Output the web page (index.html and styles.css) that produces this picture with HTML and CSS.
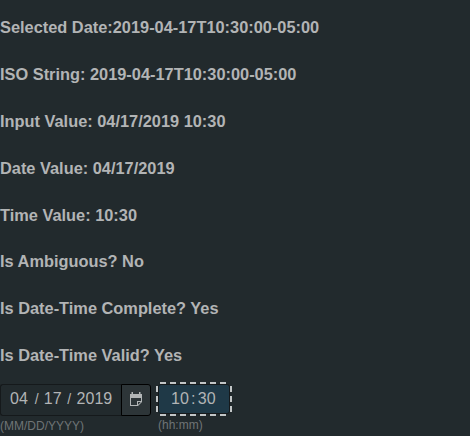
FILE: index.html
```html
<!DOCTYPE html>
<html lang="en">
<head>
<meta charset="utf-8">
<title>Date time picker</title>
<link rel="stylesheet" href="styles.css">
</head>
<body>
<h3>Selected Date:2019-04-17T10:30:00-05:00</h3>
<h3>ISO String: 2019-04-17T10:30:00-05:00</h3>
<h3>Input Value: 04/17/2019 10:30</h3>
<h3>Date Value: 04/17/2019</h3>
<h3>Time Value: 10:30</h3>
<h3>Is Ambiguous? No</h3>
<h3>Is Date-Time Complete? Yes</h3>
<h3>Is Date-Time Valid? Yes</h3>
<div class="picker">
  <div class="date">
    <div class="control">
      <div class="date-input"><span>04</span><span class="sep">/</span><span>17</span><span class="sep second">/</span><span>2019</span></div>
      <button class="calendar" aria-label="Open calendar">
        <svg width="12" height="14" viewBox="0 0 12 14"><path fill="#b2b5b6" d="M1.500 0h1.500v2h6V0h1.500v2H12v8l-4 4H0V2h1.500zM1 6v7h6V9h4V6zM8 10v2.700L10.700 10z" fill-rule="evenodd"/></svg>
      </button>
    </div>
    <div class="mask">(MM/DD/YYYY)</div>
  </div>
  <div class="time">
    <div class="focus-ring">
      <div class="time-input"><span>10</span><span class="colon">:</span><span>30</span></div>
    </div>
    <div class="mask">(hh:mm)</div>
  </div>
</div>
</body>
</html>
```

FILE: styles.css
```css
* { box-sizing: border-box; }
body {
  margin: 0;
  padding-top: 18.12px;
  overflow: hidden;
  background: #222a2d;
  color: #b2b4b5;
  font-family: "Liberation Sans", Arial, sans-serif;
  font-size: 16px;
}
h3 { margin: 0; height: 46.86px; line-height: 19px; font-size: 16.38px; }
.picker { display: flex; gap: 5px; margin-top: -11px; }
.control { display: flex; width: 151px; height: 32px; margin-top: 2px; }
.date-input {
  display: flex; align-items: center;
  width: 121px; padding: 0 0 2px 9px;
  border: 1px solid #15191b; border-right: 0;
  border-radius: 3px 0 0 3px;
}
.calendar {
  display: flex; align-items: center; justify-content: center;
  width: 30px; height: 32px; padding: 0 0 2px;
  background: #2d3538; border: 1px solid #000; border-radius: 0 3px 3px 0;
}
.sep { width: 16px; padding-left: 2px; text-align: center; font-size: 14px; }
.sep.second { width: 15px; padding-left: 0; }
.mask { font-size: 12px; line-height: 14px; color: #6f7476; margin-top: 3px; }
.focus-ring {
  --dash-x: repeating-linear-gradient(90deg, #c2c6c7 0 6px, transparent 6px 10px);
  --dash-y: repeating-linear-gradient(180deg, #c2c6c7 0 6px, transparent 6px 10px);
  width: 76px; height: 34px; padding: 2px;
  background-image: var(--dash-x), var(--dash-x), var(--dash-y), var(--dash-y);
  background-position: 4px 0, 4px 100%, 0 4px, 100% 4px;
  background-size: 70px 2px, 70px 2px, 2px 28px, 2px 28px;
  background-repeat: no-repeat;
}
.time-input {
  display: flex; align-items: center;
  height: 30px; padding: 0 0 0 12px;
  background: #1f3947; border: 1px solid #15191b; border-radius: 3px;
}
.colon { width: 9px; text-align: center; }
.time .mask { padding-left: 2px; margin-top: 2px; }
```
